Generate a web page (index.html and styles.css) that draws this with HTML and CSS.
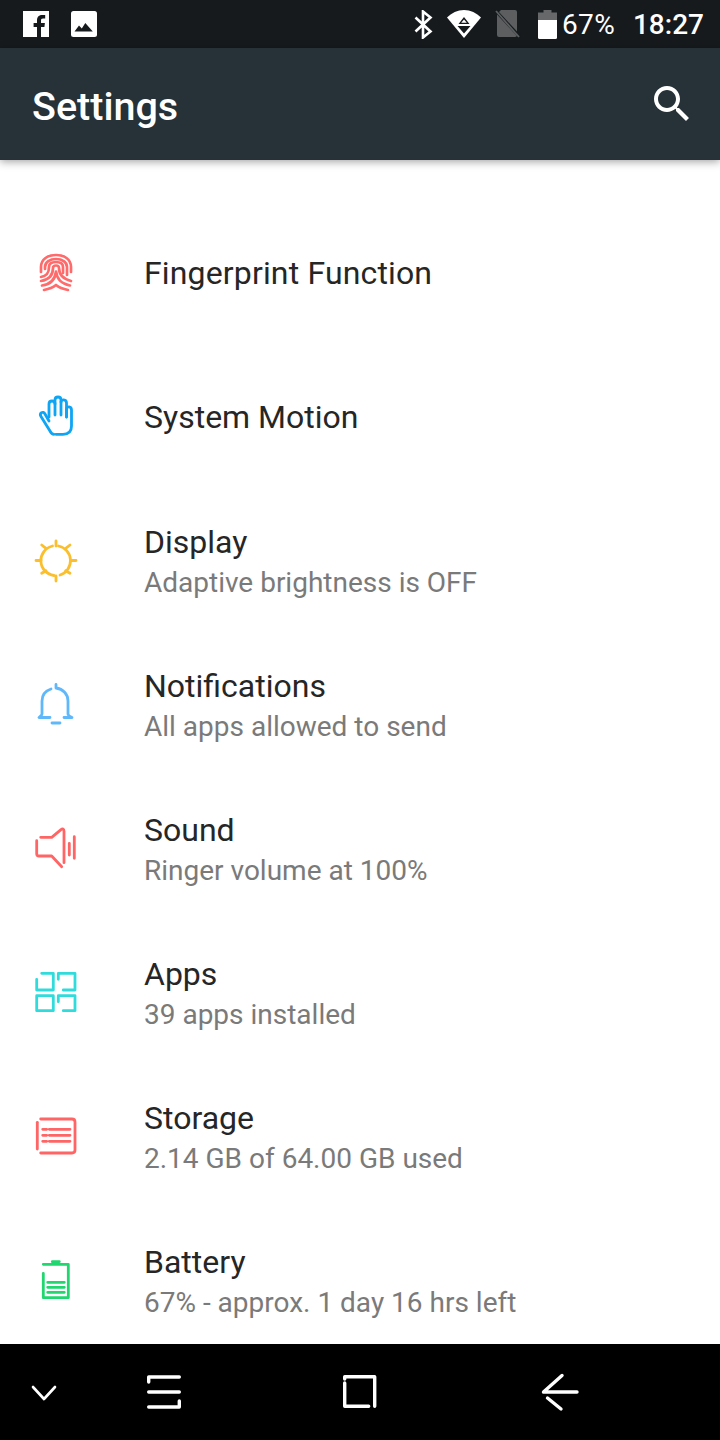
FILE: index.html
```html
<!DOCTYPE html>
<html lang="en">
<head>
    <meta charset="UTF-8">
    <meta name="viewport" content="width=device-width, initial-scale=1.0">
    <title>Settings</title>
    <link rel="stylesheet" href="styles.css">
</head>
<body>
    <div class="status-bar">
        <div class="status-left">
            <svg class="st-icon" width="26" height="26" viewBox="0 0 26 26"><rect width="26" height="26" fill="#fff"/><path d="M18 26v-10h3.400l.5-4H18V9.600c0-1.200.4-2 2-2h2.200V4.100C21.800 4 20.500 4 19.200 4c-3 0-5.200 1.900-5.200 5.200V12h-3.400v4H14v10z" fill="#161a1d"/></svg>
            <svg class="st-icon st-img" width="26" height="26" viewBox="0 0 26 26"><rect width="26" height="26" rx="2.500" fill="#fff"/><path d="M3.500 20.500l4.500-6 2.800 3 3.500-5.500 7.500 8.500z" fill="#161a1d"/></svg>
        </div>
        <div class="status-right">
            <svg class="st-icon" width="19" height="29" viewBox="0 0 19 29"><path d="M1.500 7.500l15 14-7.500 6V1.500l7.500 6-15 14" fill="none" stroke="#fff" stroke-width="2.600"/></svg>
            <svg class="st-icon st-wifi" width="34" height="28" viewBox="0 0 34 28"><path d="M0 7.500C4.500 3 10.500 0 17 0s12.500 3 17 7.500L17 28z" fill="#fff"/><path d="M17 7l5.500 7h-11zM10.500 16h13L17 23.500z" fill="#161a1d"/><path d="M17 9.500l2.800 3.300h-5.600z" fill="#fff"/></svg>
            <svg class="st-icon st-sim" width="26" height="28" viewBox="0 0 26 28"><path d="M6 0h14a2 2 0 0 1 2 2v23a2 2 0 0 1-2 2H4a2 2 0 0 1-2-2V4z" fill="#5c5e60"/><path d="M1 1l24 26" stroke="#161a1d" stroke-width="3"/><path d="M1 1l23 26" stroke="#5c5e60" stroke-width="1.800"/></svg>
            <svg class="st-icon st-batt" width="19" height="29" viewBox="0 0 19 29"><path d="M5.500 0h8v2.500H19V10H0V2.500h5.500z" fill="#66686a"/><path d="M0 10h19v17.500a1.500 1.500 0 0 1-1.500 1.500h-16A1.500 1.500 0 0 1 0 27.500z" fill="#fff"/></svg>
            <span class="st-pct">67%</span>
            <span class="st-time">18:27</span>
        </div>
    </div>

    <div class="toolbar">
        <h1 class="toolbar-title">Settings</h1>
        <svg class="search-icon" width="48" height="48" viewBox="0 0 24 24"><path d="M15.500 14h-.79l-.28-.27C15.410 12.590 16 11.110 16 9.500 16 5.910 13.090 3 9.500 3S3 5.910 3 9.500 5.910 16 9.500 16c1.610 0 3.090-.59 4.230-1.570l.27.28v.79l5 4.990L20.490 19l-4.990-5zm-6 0C7.010 14 5 11.990 5 9.500S7.010 5 9.500 5 14 7.010 14 9.500 11.990 14 9.500 14z" fill="#fff"/></svg>
    </div>

    <div class="list">
        <div class="row">
            <svg class="row-icon icon-red thin" viewBox="0 0 48 48">
                <path d="M9 23v-5C9 10 16 6 24 6s15 4 15 12v5"/>
                <path d="M13 20v-2c0-5 5-8 11-8s11 3 11 8v8"/>
                <path d="M9 28c5-1 8-3 8-10 0-3.500 3-5 7-5s7 1.500 7 5v6"/>
                <path d="M9 32c6-1 12-4 12-13 0-1.500 1-2.500 3-2.500s3 1 3 2.500c0 3 1 10 12 13"/>
                <path d="M10 36.500c7-1 13-4 14-14 1 8 5 12 14 14"/>
                <path d="M12 41c5-1 9-2.500 12-5 3 2.500 7 4 12 5"/>
            </svg>
            <div class="row-text"><div class="row-title wide">Fingerprint Function</div></div>
        </div>
        <div class="row">
            <svg class="row-icon icon-blue" viewBox="0 0 48 48">
                <path d="M24 41.300h7c5.500 0 8.500-3 8.500-8.300V17c0-4-5-4-5-1v8"/>
                <path d="M17 24V11c0-4 6-4 6 0"/>
                <path d="M23 22V7c0-4 6-4 6 0v15"/>
                <path d="M29 9c0-3 5.500-3 5.500 1v14"/>
                <path d="M17 28l-4-7c-2-3.500-6-1-4 2.500l9 14.500c1 2 2.500 3.300 4 3.300"/>
            </svg>
            <div class="row-text"><div class="row-title">System Motion</div></div>
        </div>
        <div class="row">
            <svg class="row-icon icon-yellow" viewBox="0 0 48 48">
                <path d="M26.500 9A15 15 0 0 1 28 38"/>
                <path d="M22 38.500A15 15 0 0 1 20.500 9"/>
                <path d="M24 4v5M24 39v5M4 23.500h5M39 23.500h5M9.700 8l4.300 3.300M38 8l-4.300 3.300M9.700 36.300l4.300-2.600M38 36.300l-4.300-2.600"/>
            </svg>
            <div class="row-text">
                <div class="row-title">Display</div>
                <div class="row-sub">Adaptive brightness is OFF</div>
            </div>
        </div>
        <div class="row">
            <svg class="row-icon icon-sky" viewBox="0 0 48 48">
                <path d="M24 3.500V7c7 1 12 6 12 13v13c0 1 2 2.500 4 3.500H32"/>
                <path d="M19 8c-6 2-9 6-9 12v13c0 1-2 2.500-3 3.500h11"/>
                <path d="M20 42h8"/>
            </svg>
            <div class="row-text">
                <div class="row-title">Notifications</div>
                <div class="row-sub">All apps allowed to send</div>
            </div>
        </div>
        <div class="row">
            <svg class="row-icon icon-coral" viewBox="0 0 48 48">
                <path d="M8.700 12.300h11l9-7.500c2-1.500 3.300-1 3.300 1.500v31.400"/>
                <path d="M4.700 15.700v13c0 1.500.8 2.300 2.300 2.300h12.700l10 10.700"/>
                <path d="M37.300 18.300V30M42.300 11.700v21.600"/>
            </svg>
            <div class="row-text">
                <div class="row-title">Sound</div>
                <div class="row-sub">Ringer volume at 100%</div>
            </div>
        </div>
        <div class="row">
            <svg class="row-icon icon-teal" viewBox="0 0 48 48">
                <path d="M9.700 4.300h11.600V21H4.700V10.300"/>
                <path d="M26.300 10.300v-6H43V21H31.300"/>
                <path d="M4.700 26.700h16.600v15H4.700z"/>
                <path d="M26.300 32.700v-6H43v15H31.300"/>
            </svg>
            <div class="row-text">
                <div class="row-title">Apps</div>
                <div class="row-sub">39 apps installed</div>
            </div>
        </div>
        <div class="row">
            <svg class="row-icon icon-coral" viewBox="0 0 48 48">
                <path d="M8.700 6H40c2 0 3 1 3 3v28c0 2-1 3-3 3H8.700"/>
                <path d="M5.300 9.300V36"/>
                <path d="M10.700 16.300h4M17.300 16.300H38M10.700 22.300h4M17.300 22.300H38M10.700 28.300h4M17.300 28.300H38"/>
            </svg>
            <div class="row-text">
                <div class="row-title">Storage</div>
                <div class="row-sub">2.14 GB of 64.00 GB used</div>
            </div>
        </div>
        <div class="row">
            <svg class="row-icon icon-green" viewBox="0 0 48 48">
                <path d="M11.300 7.300h25v33.400h-25V16.300"/>
                <path d="M20.300 4.700h7"/>
                <path d="M15.700 25.300h16.600M15.700 30.300h16.600M15.700 35.300h16.600"/>
            </svg>
            <div class="row-text">
                <div class="row-title">Battery</div>
                <div class="row-sub">67% - approx. 1 day 16 hrs left</div>
            </div>
        </div>
    </div>

    <div class="nav-bar">
        <svg class="nav-icon nav-chevron" viewBox="0 0 48 48"><path d="M13 19l11 12 11-12"/></svg>
        <svg class="nav-icon" viewBox="0 0 48 48"><path d="M8.700 14V9h30.600M8.700 24h30.600M39.300 33v6H8.700"/></svg>
        <svg class="nav-icon" viewBox="0 0 48 48"><path d="M8.700 11V8.700h30v29.600M8.700 15v23.300h24"/></svg>
        <svg class="nav-icon" viewBox="0 0 48 48"><path d="M26 7.500L7.500 24h33.500M11.500 30l13.500 11"/></svg>
    </div>
</body>
</html>
```

FILE: styles.css
```css
html, body {
    margin: 0;
    height: 100%;
}

body {
    width: 720px;
    height: 1440px;
    display: flex;
    flex-direction: column;
    overflow: hidden;
    background-color: white;
    font-family: Roboto, sans-serif;
}

.status-bar {
    height: 48px;
    flex: none;
    display: flex;
    align-items: center;
    justify-content: space-between;
    padding: 0 16px 0 23px;
    background-color: #161a1d;
    color: white;
}

.status-left, .status-right {
    display: flex;
    align-items: center;
}

.st-icon {
    display: block;
    flex: none;
}

.st-img { margin-left: 22px; }
.st-wifi { margin-left: 14px; }
.st-sim { margin-left: 14px; }
.st-batt { margin-left: 17px; }

.st-pct {
    margin-left: 5px;
    font-size: 28px;
    letter-spacing: 0.3px;
}

.st-time {
    margin-left: 18px;
    font-size: 28px;
    font-weight: 500;
}

.toolbar {
    height: 112px;
    flex: none;
    display: flex;
    align-items: center;
    justify-content: space-between;
    padding: 0 24px 0 32px;
    background-color: #263238;
    box-shadow: 0 2px 8px rgba(0, 0, 0, 0.35);
    position: relative;
    z-index: 1;
}

.toolbar-title {
    margin: 4px 0 0;
    font-size: 39.500px;
    font-weight: 500;
    color: white;
}

.list {
    flex: 1;
    min-height: 0;
    overflow: hidden;
    padding-top: 41px;
}

.row {
    height: 144px;
    display: flex;
    align-items: center;
    padding-left: 32px;
}

.row-icon {
    width: 48px;
    height: 48px;
    flex: none;
    margin-right: 64px;
    fill: none;
    stroke-width: 2.800;
    stroke-linecap: round;
    stroke-linejoin: round;
}

.row-icon.thin { stroke-width: 2.700; }

.icon-red { stroke: #ff6b6b; }
.icon-blue { stroke: #0ea5f5; }
.icon-yellow { stroke: #fbbf2d; }
.icon-sky { stroke: #60b8fb; }
.icon-coral { stroke: #ff6565; }
.icon-teal { stroke: #2fdbdb; }
.icon-green { stroke: #1fd66f; }

.row-title {
    font-size: 32px;
    line-height: 40px;
    color: #262626;
}

.row-title.wide { letter-spacing: 0.15px; }

.row-sub {
    margin-top: 1px;
    margin-bottom: -3px;
    font-size: 28px;
    line-height: 40px;
    color: #7a7a7a;
}

.nav-bar {
    height: 96px;
    flex: none;
    display: grid;
    grid-template-columns: 120px 196px 200px 184px;
    align-items: center;
    padding-left: 20px;
    background-color: black;
}

.nav-icon {
    width: 48px;
    height: 48px;
    fill: none;
    stroke: white;
    stroke-width: 3.400;
    stroke-linecap: round;
    stroke-linejoin: round;
}

.nav-chevron { stroke-width: 2.600; }
```
